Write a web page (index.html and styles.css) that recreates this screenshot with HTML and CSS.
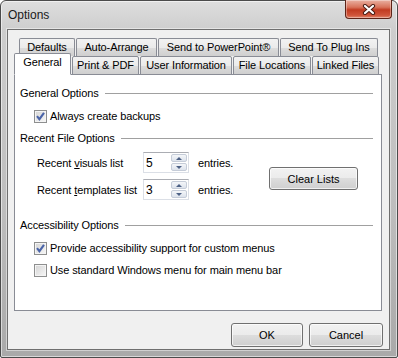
FILE: index.html
```html
<!DOCTYPE html>
<html>
<head>
    <title>Options</title>
    <meta charset=utf-8>
    <link rel="stylesheet" href="styles.css">
</head>
<body>
    <div class="window">
        <div class="titlebar">
            <span class="title">Options</span>
            <div class="close">
                <svg width="14" height="11" viewBox="0 0 14 11">
                    <path d="M3 2 L11 9 M11 2 L3 9" stroke="#4a1c14" stroke-width="4.2" stroke-linecap="round"/>
                    <path d="M3 2 L11 9 M11 2 L3 9" stroke="#fff" stroke-width="2.2" stroke-linecap="round"/>
                </svg>
            </div>
        </div>
        <div class="client">
            <div class="tabs">
                <div class="tab-row back">
                    <div class="tab t-defaults">Defaults</div>
                    <div class="tab t-arrange">Auto-Arrange</div>
                    <div class="tab t-ppt">Send to PowerPoint®</div>
                    <div class="tab t-plug">Send To Plug Ins</div>
                </div>
                <div class="tab-row front">
                    <div class="tab selected">General</div>
                    <div class="tab t-print">Print &amp; PDF</div>
                    <div class="tab t-user">User Information</div>
                    <div class="tab t-files">File Locations</div>
                    <div class="tab t-linked">Linked Files</div>
                </div>
            </div>
            <div class="panel">
                <div class="group-title">General Options</div>
                <div class="check-row first">
                    <span class="checkbox checked"></span>
                    <span>Always create backups</span>
                </div>

                <div class="group-title gap">Recent File Options</div>
                <div class="recent">
                    <div class="spins">
                        <div class="spin-row">
                            <span class="spin-label">Recent <u>v</u>isuals list</span>
                            <div class="spinbox">
                                <span class="value">5</span>
                                <div class="arrows">
                                    <span class="arrow up"></span>
                                    <span class="arrow down"></span>
                                </div>
                            </div>
                            <span class="unit">entries.</span>
                        </div>
                        <div class="spin-row">
                            <span class="spin-label">Recent <u>t</u>emplates list</span>
                            <div class="spinbox">
                                <span class="value">3</span>
                                <div class="arrows">
                                    <span class="arrow up"></span>
                                    <span class="arrow down"></span>
                                </div>
                            </div>
                            <span class="unit">entries.</span>
                        </div>
                    </div>
                    <button class="btn clear">Clear Lists</button>
                </div>

                <div class="group-title access">Accessibility Options</div>
                <div class="check-row first">
                    <span class="checkbox checked"></span>
                    <span>Provide accessibility support for custom menus</span>
                </div>
                <div class="check-row">
                    <span class="checkbox"></span>
                    <span>Use standard Windows menu for main menu bar</span>
                </div>
            </div>
            <div class="footer">
                <button class="btn ok">OK</button>
                <button class="btn cancel">Cancel</button>
            </div>
        </div>
    </div>
</body>
</html>
```

FILE: styles.css
```css
body{
    margin: 0;
    font-family: "Liberation Sans", Arial, sans-serif;
    font-size: 11px;
    letter-spacing: -0.1px;
    color: #000;
    background: #fff;
}
.window{
    width: 398px;
    height: 358px;
    box-sizing: border-box;
    border: 1px solid #4b4b4b;
    border-radius: 6px 6px 2px 2px;
    background: linear-gradient(#dedede, #cdcdcd 30px, #bdbdbd 60%, #a9a9a9);
    box-shadow: inset 0 0 0 1px rgba(255,255,255,.55);
    display: flex;
    flex-direction: column;
}
.titlebar{
    height: 28px;
    display: flex;
    align-items: flex-start;
}
.title{
    font-size: 12px;
    letter-spacing: 0;
    margin: 7px 0 0 7px;
    color: #1a1a1a;
}
.close{
    margin: -1px 5px 0 auto;
    width: 45px;
    height: 18px;
    border: 1px solid #5d2418;
    border-top: none;
    border-radius: 0 0 4px 4px;
    background: linear-gradient(#eab1a2, #d8735b 40%, #c13b21 55%, #d0553a 85%, #e08a70);
    box-shadow: inset 0 0 0 1px rgba(255,255,255,.35);
    display: flex;
    align-items: center;
    justify-content: center;
}
.client{
    flex: 1;
    margin: 0 7px 7px 6px;
    border: 1px solid #6f6f6f;
    box-shadow: 0 0 0 1px rgba(255,255,255,.45);
    background: #f0f0f0;
    display: flex;
    flex-direction: column;
}
.tabs{
    padding: 8px 0 0 6px;
}
.tab-row{
    display: flex;
    gap: 1px;
}
.tab-row.back{
    margin-left: 5px;
    height: 18px;
}
.tab-row.front{
    height: 19px;
    align-items: flex-end;
    margin-bottom: -1px;
}
.tab{
    box-sizing: border-box;
    border: 1px solid #898c95;
    border-bottom: none;
    border-radius: 2px 2px 0 0;
    background: linear-gradient(#f2f2f2, #ebebeb 50%, #dddddd 50%, #cfcfcf);
    text-align: center;
    line-height: 17px;
    height: 18px;
    white-space: nowrap;
}
.front .tab{
    height: 19px;
    border-bottom: 1px solid #898c95;
}
.front .tab.selected{
    width: 57px;
    height: 22px;
    background: #fff;
    border-bottom-color: #fff;
    position: relative;
    z-index: 1;
    line-height: 17px;
    padding-bottom: 3px;
}
.t-defaults{ width: 56px; }
.t-arrange{ width: 81px; }
.t-ppt{ width: 121px; }
.t-plug{ width: 98px; }
.t-print{ width: 67px; }
.t-user{ width: 92px; }
.t-files{ width: 78px; }
.t-linked{ width: 67px; }

.panel{
    margin: 0 7px 0 6px;
    height: 237px;
    box-sizing: border-box;
    border: 1px solid #898c95;
    background: #fff;
    padding: 11px 8px 0 5px;
}
.group-title{
    display: flex;
    align-items: center;
    line-height: 14px;
    height: 14px;
}
.group-title::after{
    content: "";
    flex: 1;
    height: 1px;
    background: #a0a0a0;
    margin-left: 6px;
}
.group-title.gap{
    margin-top: 8px;
}
.group-title.access{
    margin-top: 18px;
}
.check-row{
    display: flex;
    align-items: center;
    height: 14px;
    margin: 8px 0 0 14px;
}
.check-row.first{
    margin-top: 9px;
}
.checkbox{
    width: 13px;
    height: 13px;
    box-sizing: border-box;
    border: 1px solid #8e8f8f;
    background: linear-gradient(135deg, #d4d4d4, #f7f7f7);
    box-shadow: inset 0 0 0 1px #f4f4f4;
    margin-right: 3px;
}
.checkbox.checked{
    background-image: url("data:image/svg+xml;utf8,<svg xmlns='http://www.w3.org/2000/svg' width='11' height='11'><path d='M2 5.2 L4.4 8.2 L9 1.8' fill='none' stroke='%234a64a8' stroke-width='2.1'/></svg>"), linear-gradient(135deg, #d4d4d4, #f7f7f7);
    background-repeat: no-repeat;
}
.recent{
    display: flex;
    margin-top: 7px;
}
.spins{
    display: flex;
    flex-direction: column;
    gap: 6px;
}
.spin-row{
    display: flex;
    align-items: center;
    height: 21px;
    padding-left: 17px;
}
.spin-label{
    width: 106px;
}
.spinbox{
    width: 46px;
    height: 21px;
    box-sizing: border-box;
    border: 1px solid #dbdfe6;
    border-top-color: #abadb3;
    display: flex;
    align-items: center;
    padding-left: 2px;
    font-size: 12px;
}
.value{
    flex: 1;
}
.arrows{
    display: flex;
    flex-direction: column;
    gap: 1px;
    margin-right: 1px;
}
.arrow{
    width: 16px;
    height: 8px;
    box-sizing: border-box;
    border: 1px solid #c5ccd8;
    border-radius: 2px;
    background: linear-gradient(#f4f6f9, #dde3ec);
    display: flex;
    align-items: center;
    justify-content: center;
}
.arrow::after{
    content: "";
    border-left: 3px solid transparent;
    border-right: 3px solid transparent;
}
.arrow.up::after{
    border-bottom: 3px solid #4d6185;
}
.arrow.down::after{
    border-top: 3px solid #4d6185;
}
.unit{
    margin-left: 9px;
}
.btn{
    font-family: "Liberation Sans", Arial, sans-serif;
    font-size: 11px;
    color: #000;
    box-sizing: border-box;
    border: 1px solid #707070;
    border-radius: 3px;
    background: linear-gradient(#f2f2f2, #ebebeb 50%, #dddddd 50%, #cfcfcf);
    box-shadow: inset 0 0 0 1px rgba(255,255,255,.7);
    padding: 0;
}
.clear{
    width: 89px;
    height: 23px;
    margin: 15px 15px 0 auto;
}
.footer{
    display: flex;
    justify-content: flex-end;
    gap: 6px;
    padding: 12px 6px 0 0;
}
.ok{
    width: 72px;
    height: 24px;
}
.cancel{
    width: 74px;
    height: 24px;
}
```
